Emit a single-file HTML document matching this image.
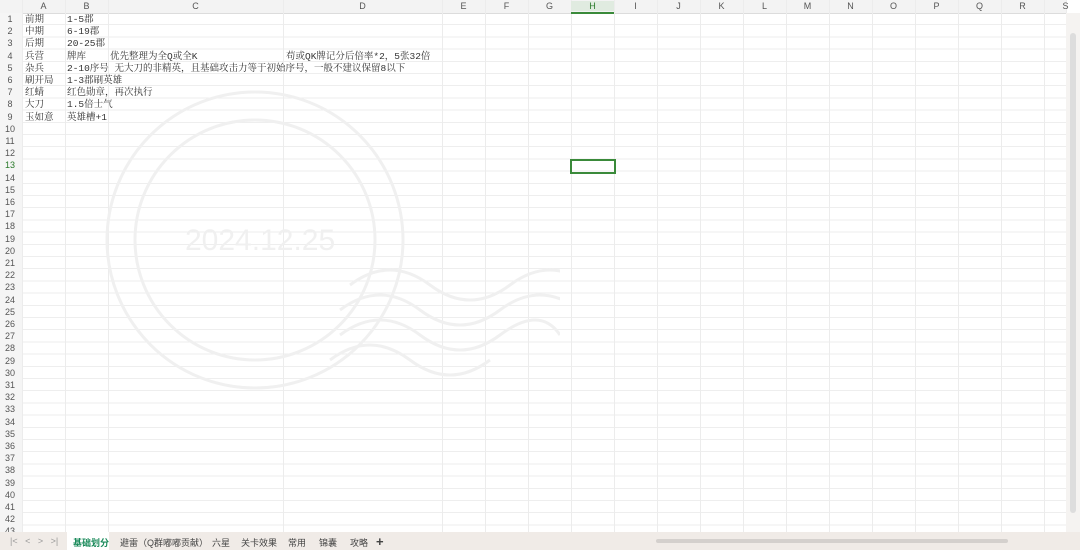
<!DOCTYPE html>
<html><head><meta charset="utf-8"><style>
body{margin:0;width:1080px;height:550px;overflow:hidden;background:#fff;font-family:"Liberation Mono","Noto Serif CJK SC",serif;position:relative}
.grid{position:absolute;left:0;top:13px;width:1066px;height:519px;
background-image:repeating-linear-gradient(to bottom,transparent 0,transparent 11.2px,#eeeeee 11.2px,#eeeeee 12.2px);}
.vl{position:absolute;top:0;height:532px;width:1px;background:#ececec}
.hdr{position:absolute;left:0;top:0;width:1066px;height:13px;background:#f3f3f3;border-bottom:1px solid #dcdcdc}
.rh{position:absolute;left:0;top:13px;width:22px;height:519px;background:#f5f5f5;border-right:1px solid #dcdcdc}
.ch{position:absolute;top:1px;font:9px "Liberation Sans",sans-serif;color:#555;text-align:center}
.rn{position:absolute;left:0;width:20px;text-align:center;font:9px "Liberation Sans",sans-serif;color:#555}
.t{position:absolute;font-size:9.5px;color:#333;white-space:nowrap;line-height:12px}
.tabs{position:absolute;left:0;top:532px;width:1080px;height:18px;background:#f0ebe7;font:9px "Liberation Sans","Noto Sans CJK SC",sans-serif;color:#444}
.tab{position:absolute;top:4px}
.sb{position:absolute;right:0;top:13px;width:14px;height:519px;background:#f5f3f1}
</style></head><body>
<div class="grid"></div>
<div class="hdr"></div><div class="rh"></div>
<div id="v"></div>
<div class="sb"><div style="position:absolute;left:4px;top:20px;width:6px;height:480px;background:#ddd;border-radius:3px"></div></div>
<svg style="position:absolute;left:100px;top:85px" width="460" height="310">
<g fill="none" stroke="#f0f0f0" stroke-width="3">
<circle cx="155" cy="155" r="148"/><circle cx="155" cy="155" r="120"/>
<path d="M250 200 q40 -30 80 0 t80 0 t80 0"/><path d="M240 225 q40 -30 80 0 t80 0 t80 0"/>
<path d="M240 250 q40 -30 80 0 t80 0 t60 0"/><path d="M230 275 q40 -30 80 0 t80 0"/>
</g>
<text x="85" y="165" font-family="Liberation Sans" font-size="30" fill="#f0f0f0">2024.12.25</text>
</svg>
<div style="position:absolute;left:570px;top:159px;width:42px;height:11px;border:2px solid #3a8a3a"></div>
<div style="position:absolute;left:571px;top:12px;width:43px;height:2px;background:#3a8a3a"></div>
<div class="ch" style="left:22px;width:43px">A</div>
<div class="ch" style="left:65px;width:43px">B</div>
<div class="ch" style="left:108px;width:175px">C</div>
<div class="ch" style="left:283px;width:159px">D</div>
<div id="cols"></div>
<div id="rows"></div>
<div class="t" style="left:25px;top:14px">前期</div><div class="t" style="left:67px;top:14px">1-5郡</div>
<div class="t" style="left:25px;top:26px">中期</div><div class="t" style="left:67px;top:26px">6-19郡</div>
<div class="t" style="left:25px;top:38px">后期</div><div class="t" style="left:67px;top:38px">20-25郡</div>
<div class="t" style="left:25px;top:51px">兵营</div><div class="t" style="left:67px;top:51px">牌库</div><div class="t" style="left:110px;top:51px">优先整理为全Q或全K</div><div class="t" style="left:286px;top:51px">苟或QK牌记分后倍率*2，5张32倍</div>
<div class="t" style="left:25px;top:63px">杂兵</div><div class="t" style="left:67px;top:63px">2-10序号 无大刀的非精英，且基础攻击力等于初始序号，一般不建议保留8以下</div>
<div class="t" style="left:25px;top:75px">刷开局</div><div class="t" style="left:67px;top:75px">1-3郡刷英雄</div>
<div class="t" style="left:25px;top:87px">红蜻</div><div class="t" style="left:67px;top:87px">红色勋章，再次执行</div>
<div class="t" style="left:25px;top:99px">大刀</div><div class="t" style="left:67px;top:99px">1.5倍士气</div>
<div class="t" style="left:25px;top:112px">玉如意</div><div class="t" style="left:67px;top:112px">英雄槽+1</div>
<div class="tabs">
<span class="tab" style="left:10px;color:#999">|&lt; &nbsp; &lt; &nbsp; &gt; &nbsp; &gt;|</span>
<div style="position:absolute;left:67px;top:0;width:42px;height:18px;background:#fff"></div>
<span class="tab" style="left:73px;color:#1a8a5a;font-weight:bold">基础划分</span>
<span class="tab" style="left:120px">避雷（Q群嘟嘟贡献）</span>
<span class="tab" style="left:212px">六星</span>
<span class="tab" style="left:241px">关卡效果</span>
<span class="tab" style="left:288px">常用</span>
<span class="tab" style="left:319px">锦囊</span>
<span class="tab" style="left:350px">攻略</span>
<span class="tab" style="left:376px;top:2px;font-size:13px;font-weight:bold">+</span>
<div style="position:absolute;left:656px;top:7px;width:352px;height:4px;background:#d4d0cd;border-radius:2px"></div>
</div>
<script>
var xs=[22,65,108,283,442,485,528,571,614,657,700,743,786,829,872,915,958,1001,1044,1066];
var v=document.getElementById('v'),h='';
xs.forEach(function(x){h+='<div class="vl" style="left:'+x+'px"></div>'});v.innerHTML=h;
var L='EFGHIJKLMNOPQRS',c='';
for(var i=0;i<L.length;i++){var x=xs[4+i];c+='<div class="ch" style="left:'+x+'px;width:43px'+(L[i]=='H'?';color:#2a7a2a;background:#e0ebe0':'')+'">'+L[i]+'</div>';}
document.getElementById('cols').innerHTML=c;
var r='';for(var k=1;k<=43;k++){r+='<div class="rn" style="top:'+(13+(k-1)*12.2+1)+'px'+(k==13?';color:#2a7a2a':'')+'">'+k+'</div>';}
document.getElementById('rows').innerHTML=r;
</script>
</body></html>
